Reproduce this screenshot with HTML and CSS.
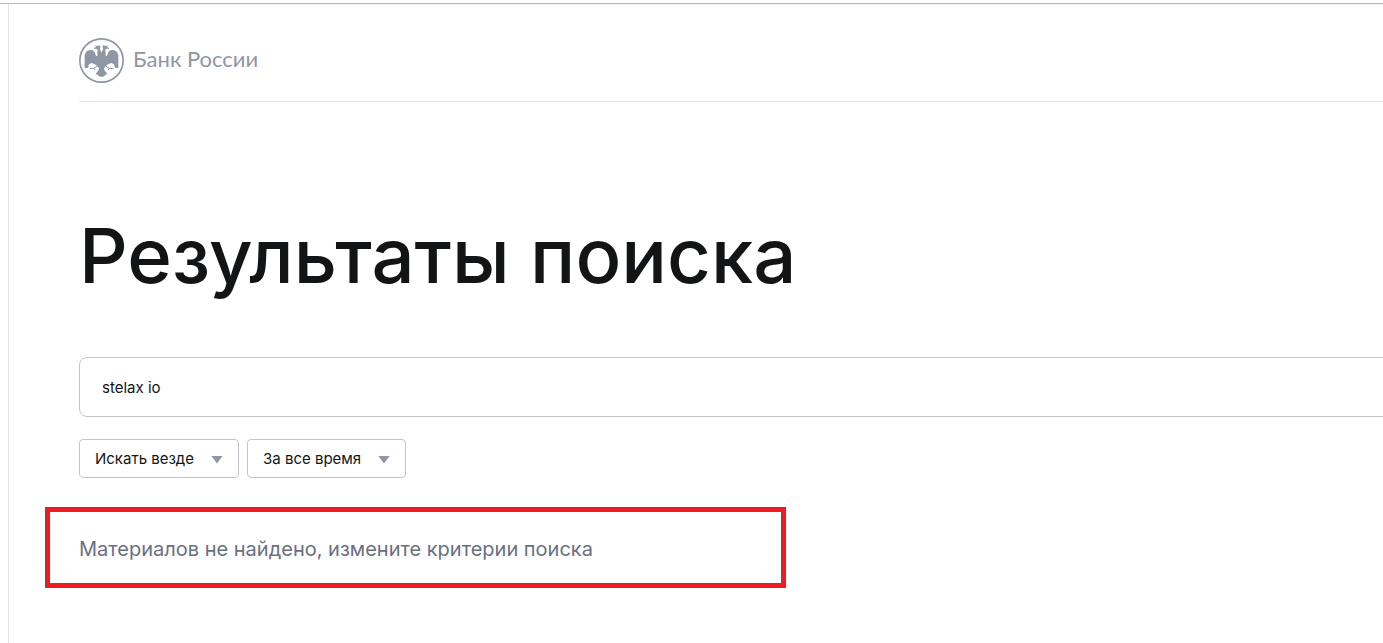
FILE: index.html
```html
<!DOCTYPE html>
<html lang="ru">
<head>
<meta charset="utf-8">
<meta name="viewport" content="width=device-width, initial-scale=1">
<title>Результаты поиска | Банк России</title>
<link rel="stylesheet" href="styles.css">
</head>
<body>
<div class="page">
  <div class="content">
    <header class="header">
      <a class="brand" href="#">
        <svg class="brand-mark" viewBox="0 0 135 135" aria-hidden="true">
          <circle cx="67.500" cy="67.500" r="65" fill="none" stroke="currentColor" stroke-width="5"/>
          <path fill="currentColor" d="M67.500 44 C65 37 62 35 63 30 L65 26 L62 22 L55 24 L48 22 L51 27 L46 29 L45 33 L52 32 L56 35 C57 39 54 43 55 47 C57 51 54 54 51 54 C49 48 48 38 37 36 C26 34 19 41 17 52 L17 91 L27 89 L30 79 L38 75 L46 78 L54 83 L60 91 L59 96 L50 108 L56 111 L60 115 L67.500 117 L75 115 L79 111 L85 108 L76 96 L75 91 L81 83 L89 78 L97 75 L105 79 L108 89 L118 91 L118 52 C116 41 109 34 98 36 C87 38 86 48 84 54 C81 54 78 51 80 47 C81 43 78 39 79 35 L83 32 L90 33 L89 29 L84 27 L87 22 L80 24 L73 22 L70 26 L72 30 C73 35 70 37 67.500 44 Z"/>
          <path fill="none" stroke="currentColor" stroke-width="3" d="M55 84 L44 91 L32 92 M44 91 L48 97 M80 84 L91 91 L103 92 M91 91 L87 97"/>
        </svg>
        <span class="brand-name">Банк России</span>
      </a>
    </header>
    <main class="main">
      <h1 class="title">Результаты поиска</h1>
      <form class="search">
        <input class="search-input" type="text" value="stelax io" aria-label="Поиск">
        <div class="filters">
          <label class="filter">
            <select class="filter-select" aria-label="Где искать"><option>Искать везде</option></select>
            <span class="filter-arrow"></span>
          </label>
          <label class="filter">
            <select class="filter-select" aria-label="Период"><option>За все время</option></select>
            <span class="filter-arrow"></span>
          </label>
        </div>
      </form>
      <p class="message">Материалов не найдено, измените критерии поиска</p>
    </main>
  </div>
</div>
</body>
</html>
```
FILE: styles.css
```css
* { box-sizing: border-box; }
body {
  margin: 0;
  padding-top: 3px;
  background: #fff;
  color: #121416;
  font-family: Inter, "Liberation Sans", sans-serif;
}
.page {
  display: flex;
  min-height: calc(100vh - 3px);
  padding-left: 8px;
  border-top: 1px solid #b5bac2;
}
.content {
  flex: 1;
  padding-left: 70px;
  border-left: 1px solid #e5e7ea;
}
.header {
  display: flex;
  align-items: center;
  height: 98px;
  padding-top: 14px;
  border-top: 1px solid #f1f2f4;
  border-bottom: 1px solid #e5e7e9;
}
.brand {
  display: flex;
  align-items: center;
  gap: 9px;
  color: #9096a6;
  text-decoration: none;
}
.brand-mark { width: 45px; height: 45px; }
.brand-name {
  padding-bottom: 2px;
  font-family: Lato, sans-serif;
  font-size: 22px;
  line-height: 28px;
}
.title {
  margin: 105px 0 54px;
  font-size: 76px;
  line-height: 96px;
  font-weight: 500;
}
.search-input {
  display: block;
  width: calc(100% + 8px);
  height: 60px;
  padding: 0 22px;
  border: 1px solid #c4c5c9;
  border-radius: 8px;
  background: #fff;
  color: #121416;
  font: 15px Inter, sans-serif;
}
.search { overflow: hidden; }
.filters {
  display: flex;
  gap: 8px;
  margin-top: 22px;
}
.filter {
  display: grid;
  align-items: center;
}
.filter-select {
  grid-area: 1 / 1;
  height: 39px;
  padding: 0 43px 0 15px;
  border: 1px solid #c4c5cc;
  border-radius: 4px;
  appearance: none;
  background: #fff;
  color: #121416;
  font: 15px Inter, sans-serif;
}
.filter-arrow {
  grid-area: 1 / 1;
  justify-self: end;
  width: 12px;
  height: 8px;
  margin: 2px 16px 0 0;
  background: #9096a6;
  clip-path: polygon(0 0, 100% 0, 50% 100%);
  pointer-events: none;
}
.message {
  width: 741px;
  max-width: 100%;
  margin: 29px 0 0 -34px;
  padding: 25px 29px 22px;
  border: 5px solid #ed1c24;
  color: #697080;
  font-size: 20px;
  line-height: 24px;
}
```
